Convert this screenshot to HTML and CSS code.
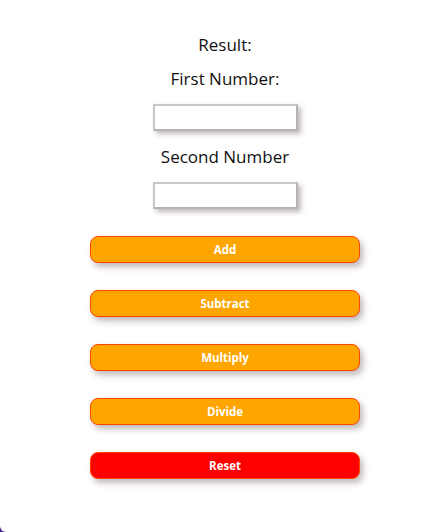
FILE: index.html
```html
<!DOCTYPE html>
<html>
<head>
<meta charset="utf-8">
<link rel="stylesheet" href="styles.css">
</head>
<body>
<div class="card">
  <p class="label result">Result:</p>
  <p class="label">First Number:</p>
  <input class="field" type="text">
  <p class="label second">Second Number</p>
  <input class="field" type="text">
  <div class="buttons">
    <button class="btn">Add</button>
    <button class="btn">Subtract</button>
    <button class="btn">Multiply</button>
    <button class="btn">Divide</button>
    <button class="btn reset">Reset</button>
  </div>
</div>
</body>
</html>
```
FILE: styles.css
```css
html, body {
  margin: 0;
  padding: 0;
  height: 100%;
}
body {
  background: #40208c;
  font-family: "Open Sans", "Noto Sans", sans-serif;
  color: #111;
  overflow: hidden;
}
.card {
  background: #fff;
  height: 532px;
  border-bottom-left-radius: 6px;
  display: flex;
  flex-direction: column;
  align-items: center;
  padding-top: 33px;
  padding-left: 8px;
  box-sizing: border-box;
}
.label {
  margin: 0;
  font-size: 17px;
  line-height: 23px;
}
.result {
  margin-bottom: 11px;
}
.second {
  margin-top: 14px;
}
.field {
  margin-top: 14px;
  width: 145px;
  height: 27px;
  box-sizing: border-box;
  border: 2px solid #b4b4b4;
  border-top-color: #c8c8c8;
  border-left-color: #c8c8c8;
  box-shadow: 3px 3px 5px rgba(120, 100, 100, 0.45);
  outline: none;
  background: #fff;
}
.buttons {
  margin-top: 27px;
  display: flex;
  flex-direction: column;
  gap: 27px;
}
.btn {
  width: 270px;
  height: 27px;
  border: 1px solid #ff4500;
  border-radius: 8px;
  background: #ffa500;
  color: #fff;
  font-family: "Open Sans", "Noto Sans", sans-serif;
  font-weight: 700;
  font-size: 11.5px;
  box-shadow: 3px 4px 6px rgba(120, 100, 100, 0.45);
  padding: 0;
}
.reset {
  background: #ff0000;
}
```
